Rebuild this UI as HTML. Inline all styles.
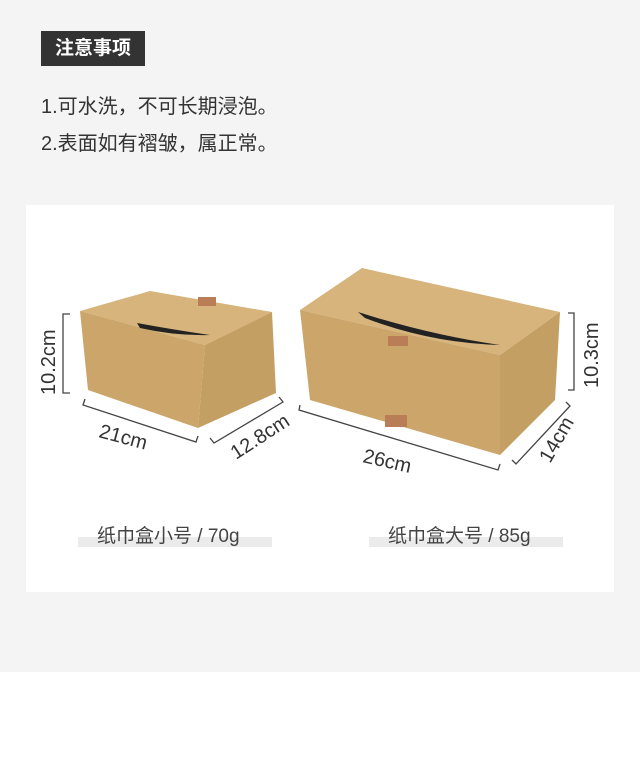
<!DOCTYPE html>
<html><head><meta charset="utf-8"><style>
body{margin:0;width:640px;height:765px;background:#fff;font-family:"Liberation Sans","Noto Sans CJK SC",sans-serif;position:relative;overflow:hidden}
.top{position:absolute;left:0;top:0;width:640px;height:672px;background:#f4f4f4}
.hd{position:absolute;left:41px;top:31px;width:104px;height:35px;background:#333;color:#fff;font-size:19px;line-height:35px;text-align:center;font-weight:bold}
.t{position:absolute;left:41px;font-size:20px;color:#333}
.panel{position:absolute;left:26px;top:205px;width:588px;height:387px;background:#fff}
.lab{position:absolute;font-size:19px;color:#444}
.bar{position:absolute;height:10px;background:#ebebeb}
</style></head><body>
<div class="top"></div>
<div class="hd">注意事项</div>
<div class="t" style="top:90px">1.可水洗，不可长期浸泡。</div>
<div class="t" style="top:127px">2.表面如有褶皱，属正常。</div>
<div class="panel"></div>
<svg style="position:absolute;left:0;top:0" width="640" height="765">
<g stroke="none">
<polygon points="80,311 150,291 272,312 205,345" fill="#d6b47c"/>
<polygon points="80,311 205,345 198,428 88,390" fill="#cba56a"/>
<polygon points="205,345 272,312 276,393 198,428" fill="#c49f64"/>
<path d="M137,323 Q175,330 210,335 Q175,336 140,328 Z" fill="#222"/>
<rect x="198" y="297" width="18" height="9" fill="#b97e55"/>
<polygon points="300,310 362,268 560,312 500,355" fill="#d6b47c"/>
<polygon points="300,310 500,355 500,455 310,400" fill="#cba56a"/>
<polygon points="500,355 560,312 555,400 500,455" fill="#c49f64"/>
<path d="M358,312 Q430,335 500,345 Q430,343 365,318 Z" fill="#222"/>
<rect x="388" y="336" width="20" height="10" fill="#b97e55"/>
<rect x="385" y="415" width="22" height="12" fill="#b97e55"/>
</g>
<g stroke="#444" stroke-width="1.3" fill="none">
<path d="M70,314 H63 V393 H70"/>
<path d="M85,399 L83,405 L196,442 L198,436"/>
<path d="M210,438 L214,443 L283,402 L279,397"/>
<path d="M568,313 H574 V390 H568"/>
<path d="M300,405 L299,410 L498,470 L500,464"/>
<path d="M512,460 L516,464 L570,406 L566,402"/>
</g>
<g font-family="Liberation Sans,sans-serif" font-size="20" fill="#333">
<text x="55" y="395" transform="rotate(-90 55 395)">10.2cm</text>
<text x="98" y="437" transform="rotate(15 98 437)">21cm</text>
<text x="236" y="460" transform="rotate(-33 236 460)">12.8cm</text>
<text x="598" y="388" transform="rotate(-90 598 388)">10.3cm</text>
<text x="362" y="462" transform="rotate(13 362 462)">26cm</text>
<text x="550" y="464" transform="rotate(-60 550 464)">14cm</text>
</g>
</svg>
<div class="bar" style="left:78px;top:537px;width:194px"></div>
<div class="lab" style="left:97px;top:521px">纸巾盒小号 / 70g</div>
<div class="bar" style="left:369px;top:537px;width:194px"></div>
<div class="lab" style="left:388px;top:521px">纸巾盒大号 / 85g</div>
</body></html>
